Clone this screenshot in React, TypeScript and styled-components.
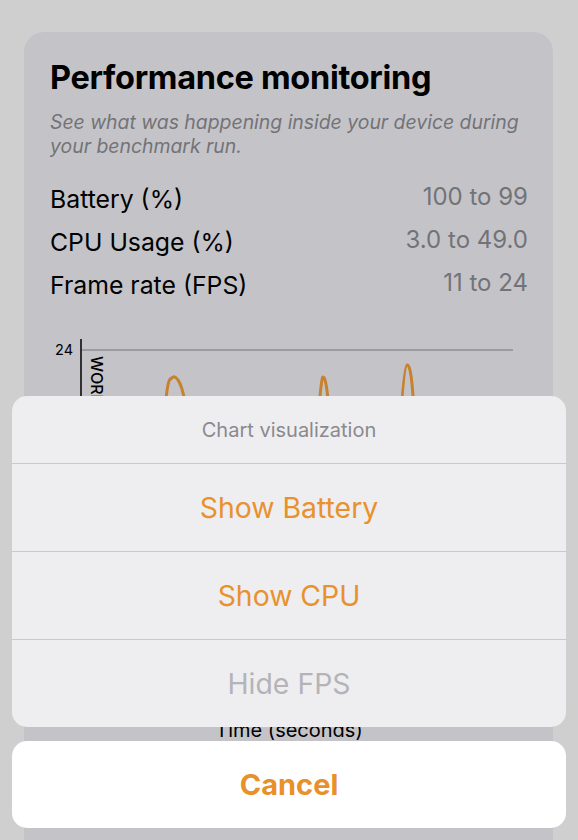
import styled, { createGlobalStyle } from "styled-components";

const GlobalStyle = createGlobalStyle`
  html, body {
    margin: 0;
    padding: 0;
    height: 100%;
    background: #ffffff;
    overflow: hidden;
  }
  body {
    font-family: Inter, "Noto Sans", sans-serif;
    -webkit-font-smoothing: antialiased;
  }
`;

const Screen = styled.div`
  position: relative;
  width: 578px;
  height: 840px;
  overflow: hidden;
  background: #ffffff;
`;

const Card = styled.section`
  margin: 32px 25px 0 24px;
  padding: 28px 25px 0 26px;
  height: 900px;
  border-radius: 20px;
  background: #f2f2f7;
`;

const Title = styled.h1`
  margin: 0;
  font-size: 32.5px;
  line-height: 36px;
  font-weight: 700;
  color: #000;
  letter-spacing: -0.3px;
`;

const Subtitle = styled.p`
  margin: 14px 0 0;
  font-size: 19.4px;
  line-height: 24px;
  font-style: italic;
  color: #8e8e93;
`;

const Stats = styled.div`
  margin-top: 19px;
  display: flex;
  flex-direction: column;
`;

const StatRow = styled.div`
  display: flex;
  justify-content: space-between;
  align-items: center;
  height: 43px;
`;

const StatLabel = styled.span`
  font-size: 24.8px;
  color: #000;
`;

const StatValue = styled.span`
  font-size: 24px;
  color: #8e8e93;
  margin-top: -5px;
`;

const Chart = styled.div`
  margin-top: 30px;
  display: flex;
  flex-direction: column;
  align-items: center;
`;

const ChartSvg = styled.svg`
  display: block;
  width: 478px;
  height: 382px;
`;

const AxisTitle = styled.div`
  font-size: 20px;
  line-height: 24px;
  color: #000;
`;

const Backdrop = styled.div`
  position: absolute;
  inset: 0;
  background: rgba(0, 0, 0, 0.19);
`;

const Sheet = styled.div`
  position: absolute;
  left: 12px;
  right: 12px;
  bottom: 12px;
  display: flex;
  flex-direction: column;
  gap: 14px;
`;

const Group = styled.div`
  border-radius: 15px;
  overflow: hidden;
  background: #eeeef0;
  display: flex;
  flex-direction: column;
`;

const SheetTitle = styled.div`
  height: 67px;
  display: flex;
  align-items: center;
  justify-content: center;
  font-size: 20px;
  color: #8a8a8e;
  border-bottom: 1px solid #c9c9cd;
`;

const Option = styled.button<{ $disabled?: boolean; $last?: boolean }>`
  height: ${(p) => (p.$last ? "87px" : "88px")};
  border: 0;
  border-bottom: ${(p) => (p.$last ? "0" : "1px solid #c9c9cd")};
  background: transparent;
  font-family: inherit;
  font-size: 28.4px;
  color: ${(p) => (p.$disabled ? "#b4b4b8" : "#e8912d")};
  padding: 0;
  cursor: pointer;
`;

const CancelButton = styled.button`
  height: 87px;
  border: 0;
  border-radius: 15px;
  background: #ffffff;
  font-family: inherit;
  font-size: 29px;
  font-weight: 700;
  color: #e8902a;
  cursor: pointer;
`;

const stats = [
  { label: "Battery (%)", value: "100 to 99" },
  { label: "CPU Usage (%)", value: "3.0 to 49.0" },
  { label: "Frame rate (FPS)", value: "11 to 24" },
];

const fpsPath =
  "M 58 250 L 90 230 L 112 120 Q 116 40 121 43 Q 124 38 128 44 Q 136 55 140 110 L 150 200 L 180 215 L 210 190 L 240 230 L 262 180 Q 270 40 273 41 Q 277 40 280 90 L 290 210 L 320 220 L 346 170 Q 352 30 357 29 Q 362 28 364 80 L 372 200 L 400 230 L 430 200 L 462 240";

const App = () => {
  return (
    <Screen>
      <GlobalStyle />
      <Card>
        <Title>Performance monitoring</Title>
        <Subtitle>
          See what was happening inside your device during your benchmark run.
        </Subtitle>
        <Stats>
          {stats.map((s) => (
            <StatRow key={s.label}>
              <StatLabel>{s.label}</StatLabel>
              <StatValue>{s.value}</StatValue>
            </StatRow>
          ))}
        </Stats>
        <Chart>
          <ChartSvg viewBox="0 0 478 382">
            <line x1="31" y1="3" x2="31" y2="344" stroke="#000" strokeWidth="1.5" />
            <line x1="31" y1="344" x2="463" y2="344" stroke="#000" strokeWidth="1.5" />
            <line x1="32" y1="14" x2="463" y2="14" stroke="#8e8e93" strokeWidth="1" />
            <line x1="32" y1="120" x2="463" y2="120" stroke="#c7c7cc" strokeWidth="1" />
            <line x1="32" y1="230" x2="463" y2="230" stroke="#c7c7cc" strokeWidth="1" />
            <text x="23" y="19" fontSize="14.5" textAnchor="end" fill="#000" fontFamily="Inter, sans-serif">
              24
            </text>
            <text x="23" y="125" fontSize="14.5" textAnchor="end" fill="#000" fontFamily="Inter, sans-serif">
              20
            </text>
            <text x="23" y="235" fontSize="14.5" textAnchor="end" fill="#000" fontFamily="Inter, sans-serif">
              15
            </text>
            <text x="23" y="349" fontSize="14.5" textAnchor="end" fill="#000" fontFamily="Inter, sans-serif">
              11
            </text>
            <text
              x="41"
              y="20"
              fontSize="16"
              fontWeight="500"
              fill="#000"
              fontFamily="Inter, sans-serif"
              transform="rotate(90 41 20)"
            >
              WORKLOAD
            </text>
            <path d={fpsPath} fill="none" stroke="#f5a03c" strokeWidth="3" strokeLinejoin="round" strokeLinecap="round" />
          </ChartSvg>
          <AxisTitle>Time (seconds)</AxisTitle>
        </Chart>
      </Card>
      <Backdrop />
      <Sheet>
        <Group>
          <SheetTitle>Chart visualization</SheetTitle>
          <Option>Show Battery</Option>
          <Option>Show CPU</Option>
          <Option $disabled $last>
            Hide FPS
          </Option>
        </Group>
        <CancelButton>Cancel</CancelButton>
      </Sheet>
    </Screen>
  );
};

export default App;
